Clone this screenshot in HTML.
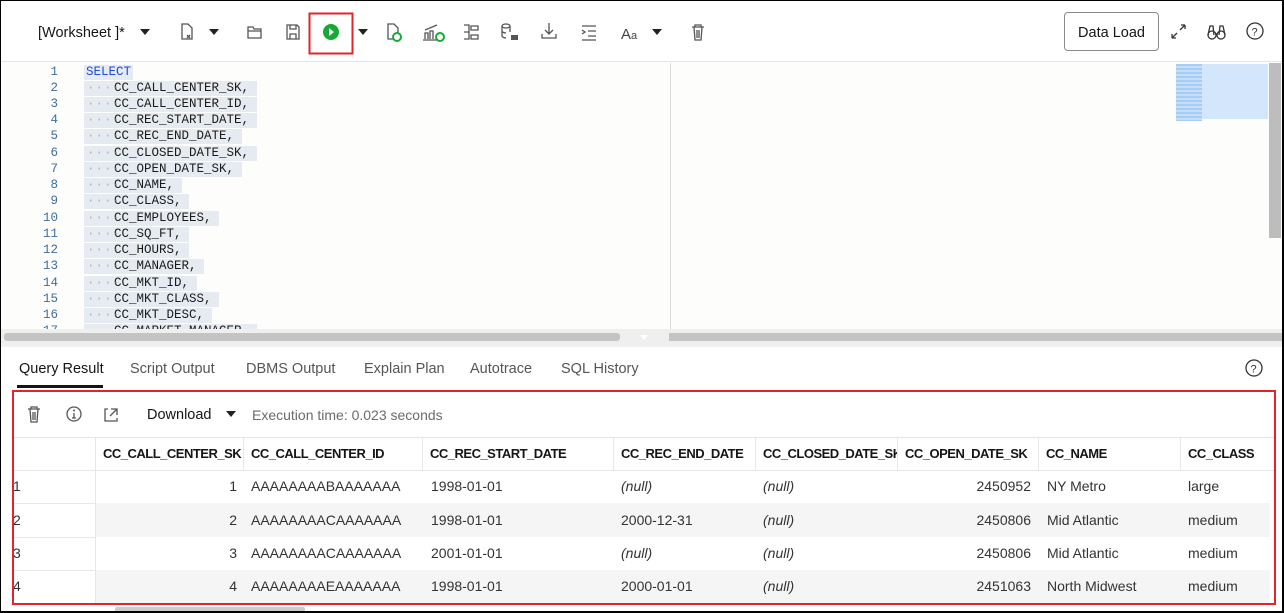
<!DOCTYPE html>
<html><head><meta charset="utf-8"><style>
*{margin:0;padding:0;box-sizing:border-box}
body{width:1284px;height:613px;overflow:hidden;background:#fff;font-family:"Liberation Sans",sans-serif;position:relative;color:#161513}
.a{position:absolute}
.frame{position:absolute;left:0;top:0;width:1284px;height:613px;border:1px solid #000;border-width:1px 2px 2px 1px;pointer-events:none;z-index:9}
.code{font-family:"Liberation Mono",monospace;font-size:12.5px;color:#1a1a1a}
.ln{position:absolute;left:40px;width:18px;text-align:right;color:#3f6e9a;font-family:"Liberation Mono",monospace;font-size:12.5px}
.cl{position:absolute;left:84px;height:15px;background:#e6ebf2;padding-left:30px;line-height:15px;white-space:pre}
.cl:before{content:"····";position:absolute;left:3px;color:#b0b6bf;letter-spacing:1px}
.tab{position:absolute;top:361px;font-size:14.5px;color:#555}
.th{position:absolute;top:438px;height:32px;line-height:32px;font-weight:bold;font-size:13px;letter-spacing:-0.5px;border-left:1px solid #e6e6e6;padding-left:7px;overflow:hidden;white-space:nowrap}
.cell{position:absolute;font-size:14px;color:#333;white-space:nowrap}
</style></head><body>
<div class="a" style="left:0;top:0;width:1284px;height:62px;background:#fff;border-bottom:1px solid #e4e4e4"></div>
<div class="a" style="left:38px;top:25px;font-size:14.5px">[Worksheet ]*</div>
<svg class="a" style="left:0;top:0" width="720" height="62">
<g fill="#222"><path d="M140 29h10l-5 6z"/><path d="M209 29h10l-5 6z"/><path d="M358 29h10l-5 6z"/><path d="M652 29h10l-5 6z"/></g>
<g fill="none" stroke="#555" stroke-width="1.3">
<path d="M182 24h6l4 4v11h-10z"/><path d="M187 35l3 3M190 35l-3 3"/>
<path d="M248 27h5l1 2h7v9h-13z M248 31h13"/>
<path d="M287 25h10l2 2v12h-12z M290 25v4h6v-4 M290 39v-5h6v5"/>
<path d="M388 24h6l4 4v11h-10z"/>
<path d="M423 40h16 M425 39v-6h3v6 M430 39v-8h3v8 M425 30l12-5"/>
<path d="M464 25h5v14h-5 M464 32h5 M471 26h7v4h-7z M471 35h7v4h-7z"/>
<ellipse cx="506" cy="26" rx="4" ry="2"/><path d="M502 26v10c0 1 2 2 4 2 M510 26v6 M502 31c0 1 2 2 4 2"/>
<path d="M549 23v11 M545 30l4 4 4-4 M542 34v4h14v-4"/>
<path d="M582 26h14 M588 31h8 M588 36h8 M582 40h14 M582 30l3 2-3 2"/>
<path d="M692 27h12 M695 27v-2h6v2 M694 27l1 13h6l1-13 M697 30v8 M699 30v8"/>
</g>
<rect x="511" y="35" width="7" height="5" fill="#555"/>
<circle cx="397" cy="37" r="4" fill="#fff" stroke="#1aa838" stroke-width="2"/>
<circle cx="440" cy="37" r="4" fill="#fff" stroke="#1aa838" stroke-width="2"/>
<text x="621" y="39" font-size="15" fill="#444" font-family="Liberation Sans">A</text><text x="631" y="39" font-size="11" fill="#444" font-family="Liberation Sans">a</text>
<rect x="309.5" y="13.5" width="43" height="40" fill="none" stroke="#e0262b" stroke-width="2"/>
<circle cx="331" cy="32" r="8" fill="#17a838"/><path d="M329 28v8l5-4z" fill="#fff"/>
</svg>
<div class="a" style="left:1064px;top:12px;width:95px;height:39px;border:1px solid #8a8a8a;border-radius:4px;font-size:14.5px;line-height:40px;text-align:center">Data Load</div>
<svg class="a" style="left:1165px;top:15px" width="110" height="34">
<g fill="none" stroke="#333" stroke-width="1.3">
<path d="M7 23l5-5 M7 23h4 M7 23v-4 M20 10l-5 5 M20 10h-4 M20 10v4"/>
<circle cx="47" cy="20" r="4"/><circle cx="56" cy="20" r="4"/><path d="M43 20l2-9h3l1 9 M60 20l-2-9h-3l-1 9"/>
<circle cx="90" cy="16" r="8"/>
</g><text x="86.5" y="20.5" font-size="11" fill="#333" font-family="Liberation Sans">?</text>
</svg>
<div class="a" style="left:0;top:63px;width:1284px;height:267px;background:#fdfdfb"></div>
<div class="a" style="left:670px;top:63px;width:1px;height:267px;background:#dcdcdc"></div>
<div class="a" style="left:1176px;top:64px;width:92px;height:55px;background:#d3e6fb"></div>
<div class="a" style="left:1176px;top:64px;width:26px;height:57px;background:repeating-linear-gradient(#a8cdf5 0 2px,#c6dff8 2px 4px)"></div>
<div class="a" style="left:1269px;top:63px;width:12px;height:175px;background:#bdbdbd"></div>
<div class="code a" style="left:0;top:64px;width:670px;height:266px;overflow:hidden">
<div class="ln" style="top:1px">1</div><div class="a" style="left:84px;top:1px;color:#1f4bd6;background:#e6ebf2;padding:0 2px;line-height:15px">SELECT</div>
<div class="ln" style="top:17px">2</div><div class="cl" style="top:17px">CC_CALL_CENTER_SK, </div>
<div class="ln" style="top:33px">3</div><div class="cl" style="top:33px">CC_CALL_CENTER_ID, </div>
<div class="ln" style="top:49px">4</div><div class="cl" style="top:49px">CC_REC_START_DATE, </div>
<div class="ln" style="top:65px">5</div><div class="cl" style="top:65px">CC_REC_END_DATE, </div>
<div class="ln" style="top:82px">6</div><div class="cl" style="top:82px">CC_CLOSED_DATE_SK, </div>
<div class="ln" style="top:98px">7</div><div class="cl" style="top:98px">CC_OPEN_DATE_SK, </div>
<div class="ln" style="top:114px">8</div><div class="cl" style="top:114px">CC_NAME, </div>
<div class="ln" style="top:130px">9</div><div class="cl" style="top:130px">CC_CLASS, </div>
<div class="ln" style="top:147px">10</div><div class="cl" style="top:147px">CC_EMPLOYEES, </div>
<div class="ln" style="top:163px">11</div><div class="cl" style="top:163px">CC_SQ_FT, </div>
<div class="ln" style="top:179px">12</div><div class="cl" style="top:179px">CC_HOURS, </div>
<div class="ln" style="top:195px">13</div><div class="cl" style="top:195px">CC_MANAGER, </div>
<div class="ln" style="top:212px">14</div><div class="cl" style="top:212px">CC_MKT_ID, </div>
<div class="ln" style="top:228px">15</div><div class="cl" style="top:228px">CC_MKT_CLASS, </div>
<div class="ln" style="top:244px">16</div><div class="cl" style="top:244px">CC_MKT_DESC, </div>
<div class="ln" style="top:260px">17</div><div class="cl" style="top:260px">CC_MARKET_MANAGER, </div>
</div>
<div class="a" style="left:0;top:329px;width:1284px;height:18px;background:#efefef"></div>
<div class="a" style="left:4px;top:333px;width:616px;height:8px;background:#c4c4c4;border-radius:3px"></div>
<div class="a" style="left:669px;top:333px;width:613px;height:8px;background:#c4c4c4"></div>
<div class="a" style="left:640px;top:335px;border:4px solid transparent;border-top:5px solid #fff"></div>
<div class="tab" style="left:19px;color:#161513">Query Result</div>
<div class="a" style="left:17px;top:385px;width:86px;height:3px;background:#161513"></div>
<div class="tab" style="left:130px">Script Output</div>
<div class="tab" style="left:246px">DBMS Output</div>
<div class="tab" style="left:364px">Explain Plan</div>
<div class="tab" style="left:470px">Autotrace</div>
<div class="tab" style="left:561px">SQL History</div>
<svg class="a" style="left:1244px;top:358px" width="20" height="20"><circle cx="10" cy="10" r="8" fill="none" stroke="#333" stroke-width="1.3"/><text x="6.5" y="14.5" font-size="11" fill="#333" font-family="Liberation Sans">?</text></svg>
<svg class="a" style="left:20px;top:402px" width="110" height="24">
<g fill="none" stroke="#555" stroke-width="1.3">
<path d="M8 7h12 M11 7v-2h6v2 M10 7l1 13h6l1-13 M13 10v8 M15 10v8"/>
<circle cx="54" cy="12" r="7"/><path d="M54 11v5 M52 16h4"/>
<path d="M88 7h-3v12h12v-3 M91 7h6v6 M97 7l-7 7"/>
</g><circle cx="54" cy="8.5" r="1" fill="#555"/>
</svg>
<div class="a" style="left:147px;top:407px;font-size:14.5px">Download</div>
<div class="a" style="left:226px;top:411px;border:5px solid transparent;border-top:6px solid #222;border-bottom:0"></div>
<div class="a" style="left:252px;top:407px;font-size:14px;color:#6b6b6b">Execution time: 0.023 seconds</div>
<div class="a" style="left:13px;top:437px;width:1262px;height:1px;background:#e4e4e4"></div>
<div class="a" style="left:95px;top:503px;width:1175px;height:34px;background:#f5f5f5"></div>
<div class="a" style="left:95px;top:570px;width:1175px;height:33px;background:#f5f5f5"></div>
<div class="a" style="left:13px;top:470px;width:1262px;height:1px;background:#e8e8e8"></div>
<div class="a" style="left:13px;top:503px;width:82px;height:1px;background:#e8e8e8"></div>
<div class="a" style="left:13px;top:537px;width:82px;height:1px;background:#e8e8e8"></div>
<div class="a" style="left:13px;top:570px;width:82px;height:1px;background:#e8e8e8"></div>
<div class="a" style="left:95px;top:438px;width:1px;height:167px;background:#e6e6e6"></div>
<div class="th" style="left:95px;width:148px">CC_CALL_CENTER_SK</div>
<div class="th" style="left:243px;width:179px">CC_CALL_CENTER_ID</div>
<div class="th" style="left:422px;width:191px">CC_REC_START_DATE</div>
<div class="th" style="left:613px;width:142px">CC_REC_END_DATE</div>
<div class="th" style="left:755px;width:142px">CC_CLOSED_DATE_SK</div>
<div class="th" style="left:897px;width:141px">CC_OPEN_DATE_SK</div>
<div class="th" style="left:1038px;width:142px">CC_NAME</div>
<div class="th" style="left:1180px;width:90px">CC_CLASS</div>
<div class="cell" style="left:13px;top:478px">1</div><div class="cell" style="left:13px;top:512px">2</div><div class="cell" style="left:13px;top:545px">3</div><div class="cell" style="left:13px;top:578px">4</div>
<div class="cell" style="left:95px;width:142px;text-align:right;top:478px">1</div><div class="cell" style="left:95px;width:142px;text-align:right;top:512px">2</div><div class="cell" style="left:95px;width:142px;text-align:right;top:545px">3</div><div class="cell" style="left:95px;width:142px;text-align:right;top:578px">4</div>
<div class="cell" style="left:251px;top:478px">AAAAAAAABAAAAAAA</div><div class="cell" style="left:251px;top:512px">AAAAAAAACAAAAAAA</div><div class="cell" style="left:251px;top:545px">AAAAAAAACAAAAAAA</div><div class="cell" style="left:251px;top:578px">AAAAAAAAEAAAAAAA</div>
<div class="cell" style="left:431px;top:478px">1998-01-01</div><div class="cell" style="left:431px;top:512px">1998-01-01</div><div class="cell" style="left:431px;top:545px">2001-01-01</div><div class="cell" style="left:431px;top:578px">1998-01-01</div>
<div class="cell" style="left:621px;top:478px;font-style:italic">(null)</div><div class="cell" style="left:621px;top:512px">2000-12-31</div><div class="cell" style="left:621px;top:545px;font-style:italic">(null)</div><div class="cell" style="left:621px;top:578px">2000-01-01</div>
<div class="cell" style="left:763px;top:478px;font-style:italic">(null)</div><div class="cell" style="left:763px;top:512px;font-style:italic">(null)</div><div class="cell" style="left:763px;top:545px;font-style:italic">(null)</div><div class="cell" style="left:763px;top:578px;font-style:italic">(null)</div>
<div class="cell" style="left:897px;width:134px;text-align:right;top:478px">2450952</div><div class="cell" style="left:897px;width:134px;text-align:right;top:512px">2450806</div><div class="cell" style="left:897px;width:134px;text-align:right;top:545px">2450806</div><div class="cell" style="left:897px;width:134px;text-align:right;top:578px">2451063</div>
<div class="cell" style="left:1047px;top:478px">NY Metro</div><div class="cell" style="left:1047px;top:512px">Mid Atlantic</div><div class="cell" style="left:1047px;top:545px">Mid Atlantic</div><div class="cell" style="left:1047px;top:578px">North Midwest</div>
<div class="cell" style="left:1188px;top:478px">large</div><div class="cell" style="left:1188px;top:512px">medium</div><div class="cell" style="left:1188px;top:545px">medium</div><div class="cell" style="left:1188px;top:578px">medium</div>
<div class="a" style="left:115px;top:607px;width:190px;height:5px;background:#ccc;border-radius:2px"></div>
<div class="a" style="left:12px;top:390px;width:1264px;height:215px;border:2px solid #e0262b"></div>
<div class="frame"></div>
</body></html>
